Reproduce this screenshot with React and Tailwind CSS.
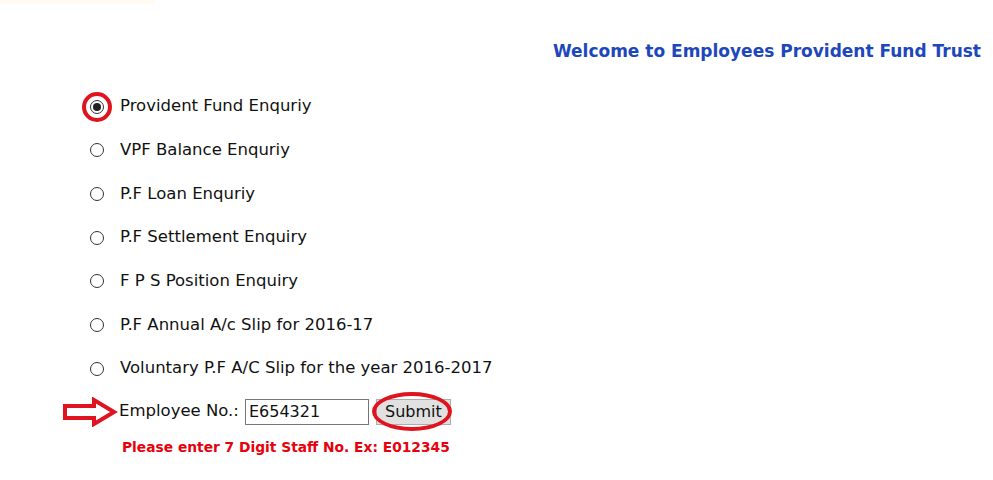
import React from "react";

const options = [
    "Provident Fund Enquriy",
    "VPF Balance Enquriy",
    "P.F Loan Enquriy",
    "P.F Settlement Enquiry",
    "F P S Position Enquiry",
    "P.F Annual A/c Slip for 2016-17",
    "Voluntary P.F A/C Slip for the year 2016-2017",
];

const Radio = ({ checked }) => (
    <span className="flex h-[14px] w-[14px] shrink-0 items-center justify-center rounded-full border border-[#333] bg-white">
        {checked && <span className="h-[8px] w-[8px] rounded-full bg-[#222]" />}
    </span>
);

const Arrow = () => (
    <svg width="56" height="30" viewBox="0 0 56 30" className="shrink-0">
        <path d="M3 9 H32 V3 L52 15 L32 27 V21 H3 Z" fill="white" stroke="#e0141e" strokeWidth="4" strokeLinejoin="miter" />
    </svg>
);

const App = () => {
    return (
        <div className="relative h-[480px] w-[993px] overflow-hidden bg-white font-['DejaVu_Sans',Verdana,sans-serif] text-[#111]">
            <div className="h-[4px] w-[155px] bg-[#fffaf2]" />

            <div className="flex justify-end pr-[12px] pt-[35px]">
                <h1 className="text-[17px] font-bold text-[#1d47bb]">Welcome to Employees Provident Fund Trust</h1>
            </div>

            <ul className="mt-[33px] flex flex-col gap-[25.7px] pl-[90px]">
                {options.map((label, i) => (
                    <li key={label} className="relative flex h-[18px] items-center gap-[16px] text-[16.5px]">
                        <Radio checked={i === 0} />
                        <span>{label}</span>
                        {i === 0 && (
                            <span className="absolute left-[-8px] top-[-6px] h-[30px] w-[30px] rounded-full border-[4px] border-[#e0141e]" />
                        )}
                    </li>
                ))}
            </ul>

            <div className="mt-[19px] flex items-center pl-[62px]">
                <Arrow />
                <span className="ml-[1px] text-[16.5px]">Employee No.:</span>
                <input
                    readOnly
                    value="E654321"
                    className="ml-[6px] h-[26px] w-[124px] border border-[#767676] px-[3px] font-['DejaVu_Sans',sans-serif] text-[16px] outline-none"
                />
                <span className="relative ml-[7px]">
                    <button className="h-[26px] w-[75px] border border-[#adadad] bg-[#e1e1e1] text-[16px]">Submit</button>
                    <span className="absolute left-[-4px] top-[-7px] h-[39px] w-[80px] rounded-[50%] border-[4px] border-[#e0141e]" />
                </span>
            </div>

            <p className="mt-[10px] pl-[122px] text-[13.8px] font-bold text-[#e8000b]">Please enter 7 Digit Staff No. Ex: E012345</p>
        </div>
    );
};

export default App;
